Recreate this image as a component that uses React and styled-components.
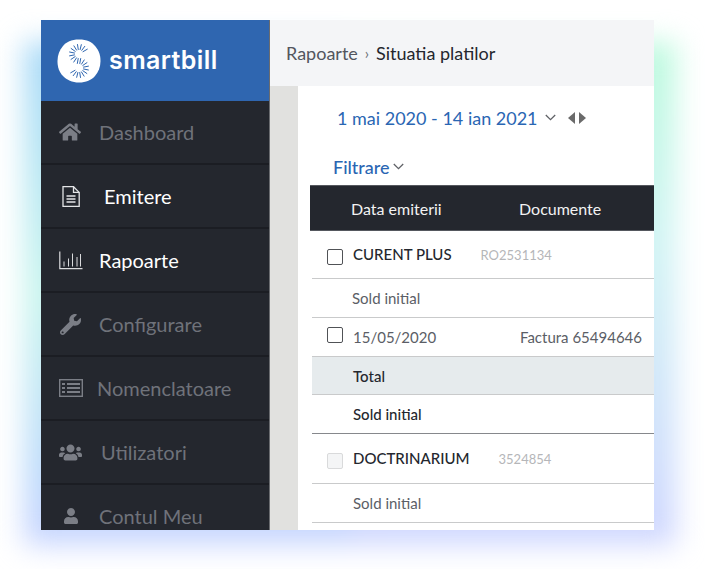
import styled, { createGlobalStyle } from "styled-components";
import { FaHome, FaWrench, FaUsers, FaUser } from "react-icons/fa";

const NAV = [
  { label: "Dashboard", icon: <FaHome size={22} />, slot: 40, iconLeft: 0 },
  { label: "Emitere", icon: <DocIcon />, slot: 45, iconLeft: 3, $active: true, up: 1 },
  { label: "Rapoarte", icon: <BarsIcon />, slot: 40, iconLeft: 0, $active: true },
  { label: "Configurare", icon: <FaWrench size={21} />, slot: 40, iconLeft: 1 },
  { label: "Nomenclatoare", icon: <ListIcon />, slot: 38, iconLeft: 0 },
  { label: "Utilizatori", icon: <FaUsers size={23} />, slot: 42, iconLeft: 0 },
  { label: "Contul Meu", icon: <FaUser size={16} />, slot: 40, iconLeft: 4 },
];

function DocIcon() {
  return (
    <svg width="18" height="21" viewBox="0 0 18 21" fill="none" stroke="#e4e5e7" strokeWidth="1.3">
      <path d="M1 .7h10.5l5.7 5.7V20.3H1z" />
      <path d="M11.5.7v5.7h5.7" />
      <path d="M4.5 10h9M4.5 13h9M4.5 16h9" />
    </svg>
  );
}

function BarsIcon() {
  return (
    <svg width="24" height="19" viewBox="0 0 24 19" fill="none" stroke="#d9dadc" strokeWidth="1">
      <path d="M.8 .5v17.2h22.7" strokeWidth="1.2" />
      <path d="M5 15.5v-5M9.5 15.5v-8M13.5 15.5V2.5M18 15.5V6M21.5 15.5V3" />
    </svg>
  );
}

function ListIcon() {
  return (
    <svg width="24" height="18" viewBox="0 0 24 18">
      <rect x=".7" y=".7" width="22.6" height="16.6" fill="none" stroke="#7b7e86" strokeWidth="1.4" />
      <path
        d="M3 4h3v2H3zM8 4h13v2H8zM3 8h3v2H3zM8 8h13v2H8zM3 12h3v2H3zM8 12h13v2H8z"
        fill="#7b7e86"
      />
    </svg>
  );
}

function sDashes() {
  // dashes standing across the centre line of an S, computed along two arcs
  const out = [];
  const push = (cx, cy, deg) => {
    const a = (deg * Math.PI) / 180;
    out.push([cx + 4.6 * Math.cos(a), cy + 4.6 * Math.sin(a), cx + 9.6 * Math.cos(a), cy + 9.6 * Math.sin(a)]);
  };
  for (let d = -30; d >= -260; d -= 23) push(22, 15, d);
  for (let d = 150; d >= -80; d -= 23) push(22, 29, d);
  return out;
}

function Logo() {
  return (
    <svg width="44" height="44" viewBox="0 0 44 44">
      <path
        d="M22 .5C30 .5 35 3 38.500 7.500 42 12 43.500 16 43.500 22S41.500 33 38 37 29 43.500 22 43.500 10 41 6 37 .500 28 .500 22 2.500 11 6 7 14 .5 22 .5z"
        fill="#fff"
      />
      <g stroke="#2f66b0" strokeWidth="1" strokeLinecap="round">
        {sDashes().map((l, i) => (
          <line key={i} x1={l[0]} y1={l[1]} x2={l[2]} y2={l[3]} />
        ))}
      </g>
    </svg>
  );
}

function Chevron() {
  return (
    <svg width="11" height="7" viewBox="0 0 11 7" fill="none" stroke="#5f6166" strokeWidth="1.300">
      <path d="M.8 1l4.7 4.600L10.200 1" />
    </svg>
  );
}

export default function App() {
  return (
    <>
      <GlobalStyle />
      <Stage>
        <Glow />
        <Frame>
          <Sidebar>
            <Brand>
              <Logo />
              <BrandName>smartbill</BrandName>
            </Brand>
            {NAV.map((item) => (
              <NavItem key={item.label}>
                <NavIcon $slot={item.slot} $left={item.iconLeft} $active={item.$active}>
                  {item.icon}
                </NavIcon>
                <NavLabel $active={item.$active}>{item.label}</NavLabel>
              </NavItem>
            ))}
          </Sidebar>

          <Main>
            <TopBar>
              <Crumb>Rapoarte</Crumb>
              <CrumbSep>›</CrumbSep>
              <CrumbCurrent>Situatia platilor</CrumbCurrent>
            </TopBar>
            <Body>
              <Gutter />
              <Content>
                <DateRow>
                  <DateRange>1 mai 2020 - 14 ian 2021</DateRange>
                  <Chevron />
                  <Arrows>
                    <ArrowLeft />
                    <ArrowRight />
                  </Arrows>
                </DateRow>
                <FilterRow>
                  <FilterLabel>Filtrare</FilterLabel>
                  <Chevron />
                </FilterRow>
                <TableHead>
                  <HeadDate>Data emiterii</HeadDate>
                  <span>Documente</span>
                </TableHead>
                <Row $h={48}>
                  <Check $up={-2} />
                  <Company>CURENT PLUS</Company>
                  <Code>RO2531134</Code>
                </Row>
                <Row $h={39}>
                  <Muted $indent={40}>Sold initial</Muted>
                </Row>
                <Row $h={39}>
                  <Check $up={2} />
                  <DateCell>15/05/2020</DateCell>
                  <span>Factura 65494646</span>
                </Row>
                <Row $h={38} $fill>
                  <Strong $indent={41}>Total</Strong>
                </Row>
                <Row $h={39} $dark>
                  <Strong $indent={41}>Sold initial</Strong>
                </Row>
                <Row $h={50}>
                  <Check $up={-2} $disabled />
                  <Company>DOCTRINARIUM</Company>
                  <Code>3524854</Code>
                </Row>
                <Row $h={39}>
                  <Muted $indent={41}>Sold initial</Muted>
                </Row>
              </Content>
            </Body>
          </Main>
        </Frame>
      </Stage>
    </>
  );
}

const GlobalStyle = createGlobalStyle`
  html, body {
    margin: 0;
    background: #fff;
    font-family: "Lato", "Liberation Sans", sans-serif;
  }
`;

const Stage = styled.div`
  position: relative;
  width: 706px;
  height: 569px;
  box-sizing: border-box;
  padding: 20px 52px 39px 41px;
  overflow: hidden;
`;

const Glow = styled.div`
  position: absolute;
  left: 24px;
  right: 30px;
  top: 42px;
  bottom: 24px;
  background:
    linear-gradient(180deg, #a9d9f8 0%, #c9f5ee 50%, #bfdcfb 85%, #c8d4ff 100%) left / 50% 100% no-repeat,
    linear-gradient(180deg, #bdfade 0%, #d2f4f4 40%, #cfd6ff 100%) right / 50% 100% no-repeat;
  filter: blur(14px);
`;

const Frame = styled.div`
  position: relative;
  display: flex;
  height: 510px;
  overflow: hidden;
  background: #fff;
`;

const Sidebar = styled.nav`
  flex: 0 0 229px;
  box-sizing: border-box;
  background: #24272e;
  border-right: 1px solid #6a6c70;
`;

const Brand = styled.div`
  display: flex;
  align-items: center;
  gap: 8px;
  height: 81px;
  padding: 0 16px;
  background: #2f66b0;
  box-sizing: border-box;
`;

const BrandName = styled.span`
  color: #fff;
  font-family: "Inter", "Liberation Sans", sans-serif;
  font-size: 25px;
  font-weight: 600;
  line-height: 1;
  letter-spacing: 0.4px;
`;

const NavItem = styled.div`
  display: flex;
  align-items: center;
  height: 64px;
  box-sizing: border-box;
  padding-left: 18px;
  border-bottom: 2px solid #1b1d23;
`;

const NavIcon = styled.span`
  display: flex;
  align-items: center;
  flex: 0 0 ${({ $slot }) => $slot}px;
  box-sizing: border-box;
  padding-left: ${({ $left }) => $left}px;
  color: #7b7e86;
`;

const NavLabel = styled.span`
  font-size: 20px;
  color: ${({ $active }) => ($active ? "#ffffff" : "#6f727a")};
`;

const Main = styled.div`
  flex: 1;
  min-width: 0;
  display: flex;
  flex-direction: column;
`;

const TopBar = styled.div`
  display: flex;
  align-items: center;
  flex: 0 0 66px;
  padding-left: 16px;
  background: #f4f5f7;
  font-size: 18px;
`;

const Crumb = styled.span`
  color: #52565e;
`;

const CrumbSep = styled.span`
  margin: 0 7px;
  color: #6a6d74;
  font-size: 15px;
`;

const CrumbCurrent = styled.span`
  color: #24272e;
`;

const Body = styled.div`
  flex: 1;
  display: flex;
  min-height: 0;
`;

const Gutter = styled.div`
  flex: 0 0 28px;
  background: #e1e1df;
`;

const Content = styled.div`
  flex: 1;
  min-width: 0;
  padding-left: 12px;
  background: #fff;
`;

const DateRow = styled.div`
  display: flex;
  align-items: center;
  height: 62px;
  padding-left: 27px;
  box-sizing: border-box;
  padding-top: 1px;
`;

const DateRange = styled.span`
  color: #2a66b3;
  font-size: 18px;
  margin-right: 7px;
`;

const Arrows = styled.span`
  display: flex;
  gap: 4px;
  margin-left: 12px;
`;

const ArrowLeft = styled.span`
  width: 0;
  height: 0;
  border-style: solid;
  border-width: 6px 7px 6px 0;
  border-color: transparent #6a6a6a transparent transparent;
`;

const ArrowRight = styled.span`
  width: 0;
  height: 0;
  border-style: solid;
  border-width: 6px 0 6px 7px;
  border-color: transparent transparent transparent #6a6a6a;
`;

const FilterRow = styled.div`
  display: flex;
  align-items: center;
  gap: 3px;
  height: 37px;
  padding-left: 23px;
`;

const FilterLabel = styled.span`
  color: #2a66b3;
  font-size: 18px;
  font-weight: 500;
`;

const TableHead = styled.div`
  display: flex;
  align-items: center;
  height: 46px;
  box-sizing: border-box;
  border-top: 1px solid #55585e;
  border-bottom: 1px solid #55585e;
  background: #24272e;
  color: #f2f2f3;
  font-size: 16px;
`;

const HeadDate = styled.span`
  flex: 0 0 209px;
  box-sizing: border-box;
  padding-left: 41px;
`;

const Row = styled.div`
  display: flex;
  align-items: center;
  height: ${({ $h }) => $h}px;
  box-sizing: border-box;
  margin-left: 2px;
  padding-left: 15px;
  white-space: nowrap;
  font-size: 15px;
  color: #5b5e66;
  background: ${({ $fill }) => ($fill ? "#e6ebed" : "transparent")};
  border-bottom: 1px solid ${({ $dark }) => ($dark ? "#86888c" : "#c9cacb")};
`;

const Check = styled.span`
  flex: 0 0 16px;
  height: 16px;
  box-sizing: border-box;
  margin-right: 10px;
  transform: translateY(${({ $up }) => -$up}px);
  border-radius: 2px;
  border: 1px solid ${({ $disabled }) => ($disabled ? "#d9dadb" : "#505256")};
  background: ${({ $disabled }) => ($disabled ? "#f4f5f6" : "#fff")};
`;

const Company = styled.span`
  color: #24272e;
  font-weight: 500;
  margin-right: 29px;
  transform: translateY(-1px);
`;

const Code = styled.span`
  color: #b5b6b9;
  font-size: 13px;
`;

const DateCell = styled.span`
  flex: 0 0 167px;
`;

const Muted = styled.span`
  margin-left: ${({ $indent }) => $indent - 15 + 0}px;
`;

const Strong = styled.span`
  margin-left: ${({ $indent }) => $indent - 15 + 0}px;
  color: #24272e;
  font-weight: 500;
`;
